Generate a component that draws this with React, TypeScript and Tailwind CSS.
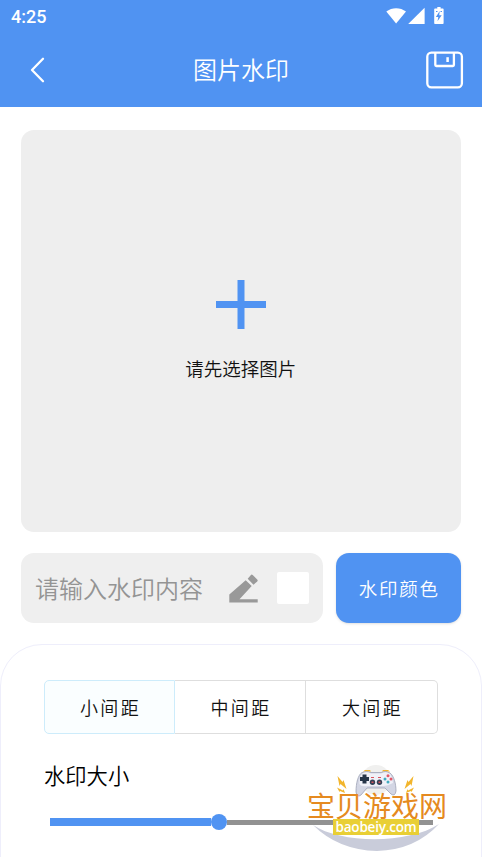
const spacings = [
  { id: "small", label: "小间距" },
  { id: "medium", label: "中间距" },
  { id: "large", label: "大间距" },
];

function StatusIcons() {
  return (
    <svg width="64" height="20" viewBox="0 0 64 20" fill="#fff">
      <path d="M0.3 5.600C6 1 14.300 1 20 5.600L10.100 17.500Z" />
      <path d="M38.600 1.700V18H22.200Z" />
      <path d="M51.300 2.400V1h3.300v1.400h2.200c.5 0 .8.3.8.800v14c0 .5-.3.800-.8.800h-7.800c-.5 0-.8-.3-.8-.800v-14c0-.5.3-.800.800-.800z" />
      <path d="M53.700 5 49.900 11H52.300L51.500 15.300 55.700 9.200H53.200Z" fill="#5093f2" />
      <path d="M50 5.500h1.500M54.500 5.500h1.500" stroke="#5093f2" />
    </svg>
  );
}

function SaveIcon() {
  return (
    <svg width="38" height="38" viewBox="0 0 38 38" fill="none" stroke="#fff" strokeWidth="2.300">
      <rect x="1.300" y="1.700" width="34.600" height="34.600" rx="4" />
      <path d="M9.300 1.700V14c0 .7.300 1 1 1H26.900c.7 0 1-.3 1-1V1.700" />
      <path d="M21.600 6.200V11" strokeWidth="2.500" />
    </svg>
  );
}

function Header() {
  return (
    <header className="h-[107px] shrink-0 bg-[#5093f2] text-white">
      <div className="flex h-8 items-center justify-between pl-[11px] pr-[32px]">
        <span className="font-[Roboto] text-[18px] font-medium leading-none pt-0.5">4:25</span>
        <StatusIcons />
      </div>
      <div className="flex h-[75px] items-center justify-between pl-[29px] pr-[18.500px]">
        <div className="flex w-[38px]">
          <svg width="17" height="26" viewBox="0 0 17 26" fill="none" stroke="#fff" strokeWidth="2.300" strokeLinecap="round" strokeLinejoin="round">
            <path d="M14 1.800 3 13 14 24.200" />
          </svg>
        </div>
        <h1 className="mr-[10.500px] pb-[2px] text-[24px] font-[350] leading-none">图片水印</h1>
        <SaveIcon />
      </div>
    </header>
  );
}

function Gamepad() {
  return (
    <svg width="142" height="94" viewBox="0 0 142 94" className="absolute left-0 top-0">
      <circle cx="69" cy="17" r="15" fill="#f0f0ef" />
      <g fill="#f2b52c">
        <path d="m30.500 13 5 6 1-2 3 9-6-5-1 2zM30 24.500l6 3 .5-1.500 1.500 4-5-2-.5 1z" />
        <path d="m106.500 13-5 6-1-2-3 9 6-5 1 2zM107 24.500l-6 3-.5-1.500-1.500 4 5-2 .5 1z" />
        <path d="M56 8.500 58 7h5l1 1.500zM75 8.500 76 7h5l2 1.500z" />
      </g>
      <path d="M55 9.500Q60 7.500 64 9.500H74Q79 7 83 10C87 13 89 21 89 28Q88 34 84 31L78 25H60L54 32Q50 35 49 29C49 20 51 12 55 9.500Z" fill="#d3d6e4" stroke="#9da2b5" strokeWidth=".8" />
      <path d="M56 10Q60 8.500 64 10.500H74Q80 8 83 11Q86 15 86 20Q80 23 76 23H61Q54 24 52.500 21Q52 14 56 10Z" fill="#f0f1f8" />
      <path d="M55.500 11.500h4V14H62v4h-2.500v2.500h-4V18H53v-4h2.500z" fill="#263548" />
      <circle cx="65.500" cy="19.300" r="2.700" fill="#344257" />
      <circle cx="72.500" cy="19.300" r="2.700" fill="#344257" />
      <path d="M64.500 19.300h2M71.500 19.300h2" stroke="#d9545e" strokeWidth="1.500" />
      <path d="M64 14.500h3M71 14.500h3" stroke="#d9545e" strokeWidth="1" />
      <circle cx="81" cy="12.800" r="1.500" fill="#e15768" />
      <circle cx="81" cy="19" r="1.500" fill="#42abc0" />
      <circle cx="78" cy="16" r="1.500" fill="#42abc0" />
      <circle cx="84" cy="16" r="1.500" fill="#e15768" />
      <path d="M6 62C34 81 102 81 132 61Q108 87 70 88Q31 87 6 62Z" fill="#c9ccda" />
    </svg>
  );
}

function SiteMark() {
  return (
    <div className="absolute left-[307px] top-[763px] h-[94px] w-[142px]">
      <Gamepad />
      <div className="relative flex flex-col pt-[29px]">
        <span className="whitespace-nowrap text-[28px] font-normal leading-[27px] text-[#e58a20]">宝贝游戏网</span>
        <span className="ml-[26px] flex h-4 w-[86px] items-center justify-center bg-[#e9cf35] pt-px font-['Open_Sans'] text-[13.500px] font-semibold leading-none tracking-[-0.200px] text-white">
          baobeiy.com
        </span>
      </div>
    </div>
  );
}

export default function App() {
  return (
    <div className="relative flex h-[857px] w-[482px] flex-col overflow-hidden bg-white font-['Noto_Sans_CJK_SC',sans-serif] font-[350] text-[#111]">
      <Header />

      <main className="flex flex-1 flex-col">
        <button className="ml-[21px] mr-[21.500px] mt-[23px] flex h-[402px] shrink-0 flex-col items-center rounded-[13px] bg-[#eee] pt-[150px]">
          <svg width="50" height="49" viewBox="0 0 50 49" stroke="#5093f2" strokeWidth="7">
            <path d="M25 0V49M0 24.500H50" />
          </svg>
          <span className="mt-[30px] text-[18.500px] leading-[18px]">请先选择图片</span>
        </button>

        <div className="ml-[21px] mr-[21.500px] mt-[21px] flex h-[70px] shrink-0 gap-[13px]">
          <div className="flex w-[302px] items-center rounded-[13px] bg-[#efefef] pl-[14px] pr-[14px]">
            <span className="text-[24px] leading-none text-[#949494]">请输入水印内容</span>
            <svg className="ml-auto mr-[19px]" width="29" height="29" viewBox="0 0 29 29" fill="#999">
              <path d="M0.300 20.500 16.700 6.200 22.700 12 10.500 25.300H28.700V28.500H0.300Z" />
              <path d="M18.700 4.800 21.700 1.200Q22.700 0 23.700 1L28.200 5.500Q29.200 6.500 28.200 7.500L24.500 10.800Z" />
            </svg>
            <div className="h-8 w-8 rounded-[2px] bg-white" />
          </div>
          <button className="flex-1 rounded-[13px] bg-[#5093f2] pl-[2px] pt-px text-[18.500px] tracking-[1.800px] text-white shadow-sm">
            水印颜色
          </button>
        </div>

        <section className="mt-[21px] flex h-[300px] shrink-0 flex-col rounded-t-[42px] border border-[#eeeefb] px-[43px] pt-[35px]">
          <div className="flex h-[54px] w-[394px]">
            {spacings.map((s, i) => (
              <button
                key={s.id}
                className={
                  i === 0
                    ? "w-[131px] rounded-l-[5px] border border-[#cdecfb] bg-[#fafeff] pl-[2px] text-[18px] tracking-[2.300px]"
                    : i === 1
                      ? "w-[131px] border-y border-r border-[#dedede] pl-[2px] text-[18px] tracking-[2.300px]"
                      : "flex-1 rounded-r-[5px] border-y border-r border-[#dedede] pl-[2px] text-[18px] tracking-[2.300px]"
                }
              >
                {s.label}
              </button>
            ))}
          </div>

          <h2 className="mb-[28px] mt-[30px] text-[21.300px] leading-[22px] text-black">水印大小</h2>
          <div className="ml-[5.500px] flex h-4 w-[383px] items-center">
            <div className="h-2 w-[161.500px] bg-[#5093f2]" />
            <div className="h-4 w-4 rounded-full bg-[#5093f2]" />
            <div className="h-[5px] flex-1 bg-[#929292]" />
          </div>
        </section>
      </main>

      <SiteMark />
    </div>
  );
}
